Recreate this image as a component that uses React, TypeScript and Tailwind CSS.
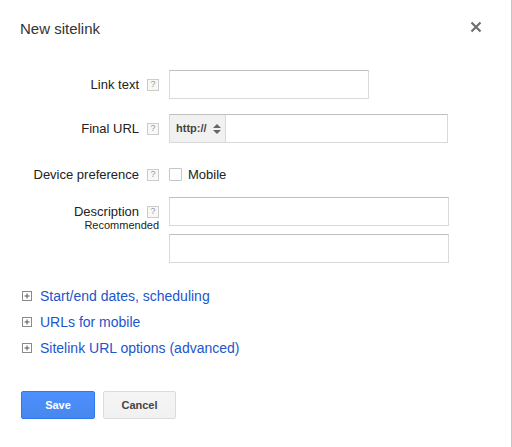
import React from "react";

function Help() {
  return (
    <span className="ml-[8px] inline-flex h-[12px] w-[12px] items-center justify-center border border-[#cccccc] bg-[#f8f8f8] text-[9px] leading-none text-[#999]">
      ?
    </span>
  );
}

function Plus() {
  return (
    <svg width="10" height="10" viewBox="0 0 10 10" className="shrink-0">
      <rect x="0.5" y="0.5" width="9" height="9" fill="#fff" stroke="#8a8a8a" />
      <line x1="2.5" y1="5" x2="7.5" y2="5" stroke="#555" />
      <line x1="5" y1="2.5" x2="5" y2="7.5" stroke="#555" />
    </svg>
  );
}

const inputCls =
  "h-[29px] border border-[#d9d9d9] border-t-[#c0c0c0] bg-white";

export default function App() {
  return (
    <div className="relative h-[447px] w-[512px] border-r border-[#c4c4c4] bg-white font-['Liberation_Sans',Arial,sans-serif] text-[#222]">
      <div className="flex items-start justify-between pl-[20px] pr-[29px] pt-[20px]">
        <div className="text-[15px] leading-[18px] text-[#333]">New sitelink</div>
        <svg width="12" height="12" viewBox="0 0 12 12" className="mt-[1px]">
          <path d="M1.5 1.5 L10.5 10.5 M10.5 1.5 L1.5 10.5" stroke="#707070" strokeWidth="2.2" />
        </svg>
      </div>

      <div className="mt-[32px] grid grid-cols-[159px_1fr] gap-x-[10px] text-[13px]">
        {/* Link text */}
        <div className="flex h-[29px] items-center justify-end">
          <span>Link text</span>
          <Help />
        </div>
        <div className={`${inputCls} w-[200px]`} />

        {/* Final URL */}
        <div className="mt-[15px] flex h-[29px] items-center justify-end">
          <span>Final URL</span>
          <Help />
        </div>
        <div className={`${inputCls} mt-[15px] flex w-[279px]`}>
          <div className="flex h-full w-[56px] items-center border-r border-[#d9d9d9] bg-[#f1f1f1] pl-[6px]">
            <span className="text-[11px] font-bold text-[#444]">http://</span>
            <svg width="8" height="10" viewBox="0 0 8 10" className="ml-[6px]">
              <path d="M0 4 L4 0 L8 4 Z" fill="#666" />
              <path d="M0 6 L4 10 L8 6 Z" fill="#666" />
            </svg>
          </div>
          <div className="flex-1" />
        </div>

        {/* Device preference */}
        <div className="mt-[17px] flex h-[29px] items-center justify-end">
          <span>Device preference</span>
          <Help />
        </div>
        <div className="mt-[17px] flex h-[29px] items-center">
          <span className="h-[13px] w-[13px] rounded-[1px] border border-[#c6c6c6] bg-white" />
          <span className="ml-[6px]">Mobile</span>
        </div>

        {/* Description */}
        <div className="mt-[8px] flex flex-col items-end">
          <div className="flex h-[29px] items-center justify-end">
            <span>Description</span>
            <Help />
          </div>
          <div className="mt-[-7px] text-[11px] leading-[13px]">Recommended</div>
        </div>
        <div className="mt-[8px] flex flex-col gap-[8px]">
          <div className={`${inputCls} w-[280px]`} />
          <div className={`${inputCls} w-[280px]`} />
        </div>
      </div>

      <div className="mt-[20px] flex flex-col pl-[22px] text-[14px] text-[#1c55cc]">
        {["Start/end dates, scheduling", "URLs for mobile", "Sitelink URL options (advanced)"].map(
          (t) => (
            <div key={t} className="flex h-[26px] items-center gap-[8px]">
              <Plus />
              <span>{t}</span>
            </div>
          )
        )}
      </div>

      <div className="mt-[30px] flex gap-[8px] pl-[21px]">
        <button className="h-[28px] w-[74px] rounded-[2px] border border-[#3079ed] bg-gradient-to-b from-[#4d90fe] to-[#4787ed] text-[11px] font-bold text-white">
          Save
        </button>
        <button className="h-[28px] w-[73px] rounded-[2px] border border-[#dcdcdc] bg-gradient-to-b from-[#f5f5f5] to-[#f1f1f1] text-[11px] font-bold text-[#444]">
          Cancel
        </button>
      </div>
    </div>
  );
}
